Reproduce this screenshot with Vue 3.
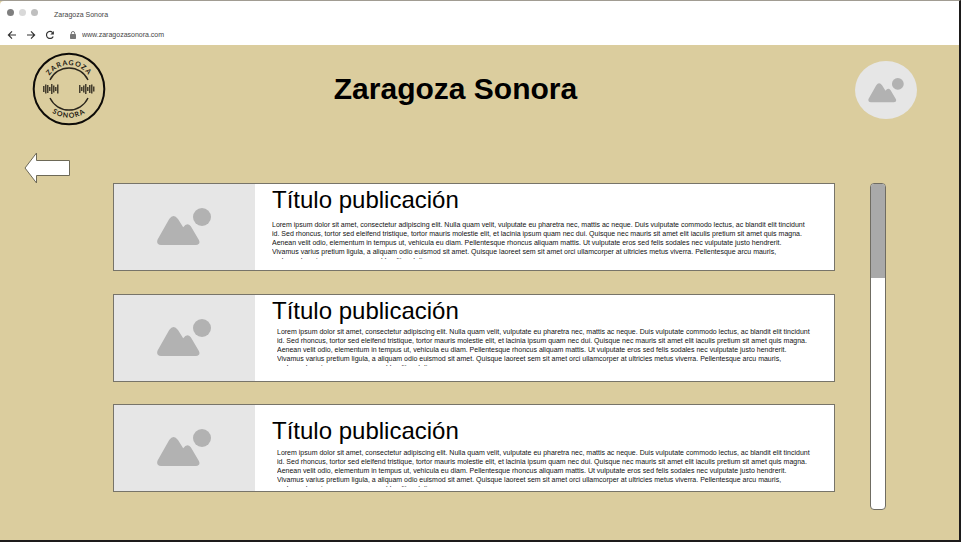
<script setup>
const lorem =
  'Lorem ipsum dolor sit amet, consectetur adipiscing elit. Nulla quam velit, vulputate eu pharetra nec, mattis ac neque. Duis vulputate commodo lectus, ac blandit elit tincidunt id. Sed rhoncus, tortor sed eleifend tristique, tortor mauris molestie elit, et lacinia ipsum quam nec dui. Quisque nec mauris sit amet elit iaculis pretium sit amet quis magna. Aenean velit odio, elementum in tempus ut, vehicula eu diam. Pellentesque rhoncus aliquam mattis. Ut vulputate eros sed felis sodales nec vulputate justo hendrerit. Vivamus varius pretium ligula, a aliquam odio euismod sit amet. Quisque laoreet sem sit amet orci ullamcorper at ultricies metus viverra. Pellentesque arcu mauris, malesuada quis ornare accumsan, blandit sed diam.'

const posts = [
  { id: 1, title: 'Título publicación', text: lorem, variant: 'spaced' },
  { id: 2, title: 'Título publicación', text: lorem, variant: 'indented' },
  { id: 3, title: 'Título publicación', text: lorem, variant: 'indented lowered' },
]

const bars = [
  { x: 11, h: 6 }, { x: 13, h: 9 }, { x: 15, h: 8 }, { x: 17, h: 4 }, { x: 19, h: 10 },
  { x: 21, h: 7 }, { x: 23, h: 4 }, { x: 25, h: 9 },
  { x: 47, h: 8 }, { x: 49, h: 4 }, { x: 51, h: 7 }, { x: 53, h: 10 }, { x: 55, h: 4 },
  { x: 57, h: 8 }, { x: 59, h: 9 }, { x: 61, h: 5 },
]
</script>

<template>
  <div class="window">
    <div class="browser">
      <div class="tab-row">
        <span class="dot dark"></span>
        <span class="dot light"></span>
        <span class="dot mid"></span>
        <span class="tab-title">Zaragoza Sonora</span>
      </div>
      <div class="nav-row">
        <button type="button" aria-label="Back">
          <svg viewBox="0 0 10 10"><path d="M9 5H1.6M5 1.4L1.4 5L5 8.6" /></svg>
        </button>
        <button type="button" aria-label="Forward">
          <svg viewBox="0 0 10 10"><path d="M1 5H8.4M5 1.4L8.6 5L5 8.6" /></svg>
        </button>
        <button type="button" aria-label="Reload">
          <svg viewBox="0 0 10 10">
            <path d="M8.2 6.4A3.5 3.5 0 1 1 7.6 2.6" />
            <path class="solid" d="M8.9 0.9V4.4H5.4Z" />
          </svg>
        </button>
        <svg class="lock" viewBox="0 0 6 8">
          <rect x="0" y="3" width="6" height="5" rx="0.7" />
          <path d="M1.3 3.2V2.2a1.7 1.7 0 0 1 3.4 0V3.2" />
        </svg>
        <input class="address" type="text" value="www.zaragozasonora.com" aria-label="Address" />
      </div>
    </div>

    <header class="header">
      <svg class="logo" viewBox="0 0 74 74" role="img" aria-label="Zaragoza Sonora">
        <defs>
          <path id="arc-top" d="M13.2 37A23.8 23.8 0 0 1 60.8 37" />
          <path id="arc-bottom" d="M8.2 37A28.8 28.8 0 0 0 65.8 37" />
        </defs>
        <circle class="ring" cx="37" cy="37" r="35.3" />
        <path class="arc" d="M18 28A21 21 0 0 1 56 28" />
        <path class="arc" d="M18 46A21 21 0 0 0 56 46" />
        <rect v-for="b in bars" :key="b.x" :x="b.x" :y="37 - b.h / 2" width="1.5" :height="b.h" />
        <text><textPath href="#arc-top" startOffset="50%">ZARAGOZA</textPath></text>
        <text><textPath href="#arc-bottom" startOffset="50%">SONORA</textPath></text>
      </svg>
      <h1>Zaragoza Sonora</h1>
      <button class="avatar" type="button" aria-label="Perfil">
        <svg viewBox="0 0 54 38">
          <path d="M4 37Q-1.200 36.500 0.600 31.500L12.200 11Q16.500 5 21 11L26.200 19.300Q30 14 33.800 18.200L41.900 32Q43.900 36.400 39 37Z" />
          <circle cx="45" cy="9" r="9" />
        </svg>
      </button>
    </header>

    <main class="content">
      <button class="back" type="button" aria-label="Volver">
        <svg viewBox="0 0 46 32">
          <path d="M1 16L12.500 1V8.500H45.500V23.500H12.500V31Z" />
        </svg>
      </button>

      <div class="posts">
        <article v-for="post in posts" :key="post.id" class="post">
          <div class="thumb">
            <svg viewBox="0 0 54 38">
              <path d="M4 37Q-1.200 36.500 0.600 31.500L12.200 11Q16.500 5 21 11L26.200 19.300Q30 14 33.800 18.200L41.900 32Q43.900 36.400 39 37Z" />
              <circle cx="45" cy="9" r="9" />
            </svg>
          </div>
          <div class="body" :class="post.variant">
            <h2>{{ post.title }}</h2>
            <p>{{ post.text }}</p>
          </div>
        </article>
      </div>

      <div class="scrollbar"><div class="thumb-bar"></div></div>
    </main>
  </div>
</template>

<style>
body {
  background: #dbcd9e;
}
</style>

<style scoped>
* {
  box-sizing: border-box;
}
.window {
  min-height: 100vh;
  background: #dbcd9e;
  border-top: 1px solid #a19c92;
  border-right: 2px solid #1d1b1b;
  border-bottom: 2px solid #1d1b1b;
  font-family: "Liberation Sans", Arial, sans-serif;
  color: #000;
}
button {
  padding: 0;
  border: 0;
  background: none;
  display: block;
}
svg {
  display: block;
}
.browser {
  height: 44px;
  background: #fff;
  border-radius: 4px 0 0 0;
}
.tab-row {
  display: flex;
  align-items: center;
  gap: 5px;
  height: 22px;
  padding-left: 7px;
}
.dot {
  width: 7px;
  height: 7px;
  border-radius: 50%;
}
.dark { background: #7f7f7f; }
.light { background: #d9d9d9; }
.mid { background: #bfbfbf; }
.tab-title {
  padding: 5px 0 0 11px;
  font-size: 7px;
  line-height: 8px;
  color: #444;
}
.nav-row {
  display: flex;
  align-items: center;
  height: 22px;
  padding: 1px 0 0 7px;
  gap: 9px;
}
.nav-row button svg {
  width: 10px;
  height: 10px;
  fill: none;
  stroke: #333;
  stroke-width: 1.2;
}
.nav-row .solid {
  fill: #333;
  stroke: none;
}
.lock {
  width: 6px;
  height: 8px;
  margin-left: 6px;
  fill: #777;
}
.lock path {
  fill: none;
  stroke: #777;
}
.address {
  width: 200px;
  margin-left: -3px;
  padding: 0;
  border: 0;
  outline: 0;
  background: none;
  font: 7px/10px "Liberation Sans", Arial, sans-serif;
  color: #444;
}
.header {
  display: flex;
  justify-content: space-between;
  align-items: center;
  height: 88px;
  padding: 0 42px 0 32px;
}
.logo {
  width: 74px;
  height: 74px;
}
.ring {
  fill: none;
  stroke: #0d0b08;
  stroke-width: 2;
}
.arc {
  fill: none;
  stroke: #2b261c;
  stroke-width: 1.4;
}
.logo rect {
  fill: #453e2e;
}
.logo text {
  font: 700 7px Lato, sans-serif;
  letter-spacing: 1px;
  text-anchor: middle;
  fill: #1d1912;
}
h1 {
  margin: 0;
  padding-right: 50px;
  font-size: 30px;
  line-height: 34px;
  font-weight: 700;
}
.avatar {
  display: flex;
  align-items: center;
  justify-content: center;
  width: 62px;
  height: 58px;
  margin-top: 2px;
  border-radius: 50%;
  background: #e6e6e6;
}
.avatar svg {
  width: 36px;
  height: 25px;
}
.avatar svg,
.thumb svg {
  fill: #b2b2b2;
}
.content {
  display: flex;
  align-items: flex-start;
  padding: 19px 73px 29px 24px;
}
.back svg {
  width: 46px;
  height: 32px;
  fill: #fff;
  stroke: #6d6957;
}
.posts {
  display: flex;
  flex: 1;
  flex-direction: column;
  justify-content: space-between;
  min-height: 309px;
  margin: 31px 35px 0 43px;
}
.post {
  display: flex;
  height: 88px;
  background: #fff;
  border: 1px solid #777469;
}
.thumb {
  display: flex;
  flex: none;
  align-items: center;
  justify-content: center;
  width: 141px;
  padding-right: 2px;
  background: #e6e6e6;
}
.thumb svg {
  width: 54px;
  height: 38px;
}
.body {
  flex: 1;
  padding: 2px 18px 0 17px;
}
.lowered {
  padding-top: 12px;
}
h2 {
  margin: 0;
  font-size: 24px;
  line-height: 27px;
  font-weight: 400;
}
p {
  max-width: 536px;
  height: 39px;
  margin: 0;
  overflow: hidden;
  font-size: 7px;
  line-height: 9px;
  color: #111;
}
.spaced p {
  margin-top: 7px;
}
.indented p {
  margin-top: 3px;
  margin-left: 5px;
}
.lowered p {
  margin-top: 4px;
}
.scrollbar {
  width: 16px;
  height: 327px;
  margin-top: 31px;
  overflow: hidden;
  background: #fff;
  border: 1px solid #6f6c62;
  border-radius: 4px;
}
.thumb-bar {
  height: 29%;
  background: #a9a9a9;
}
</style>
